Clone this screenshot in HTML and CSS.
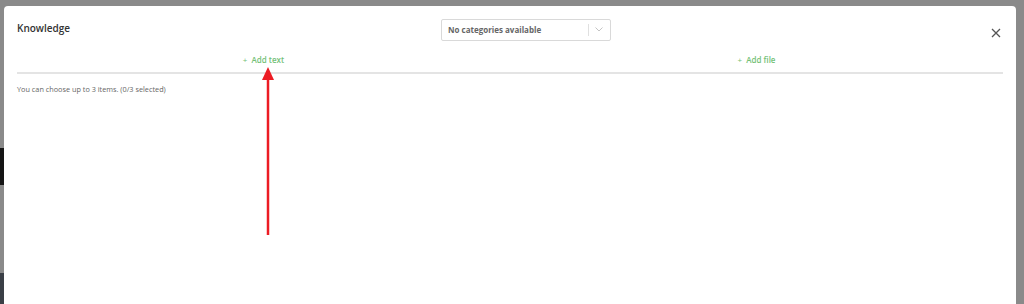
FILE: index.html
```html
<!DOCTYPE html>
<html lang="en">
<head>
    <meta charset="UTF-8">
    <meta name="viewport" content="width=device-width, initial-scale=1.0">
    <title>Knowledge</title>
    <link rel="stylesheet" href="styles.css">
</head>
<body>

<div class="backdrop">
    <div class="page-edge left">
        <div class="edge-block"></div>
        <div class="edge-photo"></div>
    </div>

    <div class="modal">
        <div class="modal-header">
            <h2 class="modal-title">Knowledge</h2>
            <div class="select">
                <span class="select-value">No categories available</span>
                <span class="select-sep"></span>
                <svg class="select-chevron" width="8" height="5" viewBox="0 0 8 5">
                    <path d="M0.5 0.5 L4 4 L7.5 0.5" fill="none" stroke="#c4c4c4" stroke-width="1"/>
                </svg>
            </div>
            <button class="close" type="button">
                <svg width="10" height="10" viewBox="0 0 10 10">
                    <path d="M1 1 L9 9 M9 1 L1 9" stroke="#555" stroke-width="1.3"/>
                </svg>
            </button>
        </div>

        <div class="tabs">
            <div class="tab"><span class="plus">+</span> Add text</div>
            <div class="tab"><span class="plus">+</span> Add file</div>
        </div>

        <p class="hint">You can choose up to 3 items. (0/3 selected)</p>

        <!-- annotation arrow over the screenshot -->
        <svg class="arrow" width="16" height="170" viewBox="0 0 16 170">
            <path d="M8 10 L8 168" stroke="#ec1c24" stroke-width="2.5"/>
            <path d="M8 0 L14 13 L2 13 Z" fill="#ec1c24"/>
        </svg>
    </div>
</div>

</body>
</html>
```

FILE: styles.css
```css
body {
    margin: 0;
    font-family: "Open Sans", "Noto Sans", sans-serif;
    background-color: #8a8a8a;
    overflow: hidden;
}

.backdrop {
    position: relative;
    height: 304px;
    padding: 6px 8px 0 4px;
    box-sizing: border-box;
}

.page-edge.left {
    position: absolute;
    left: 0;
    top: 0;
    width: 4px;
    height: 304px;
}

.edge-block {
    margin-top: 148px;
    height: 37px;
    background: #151515;
}

.edge-photo {
    margin-top: 88px;
    height: 31px;
    background: #3a3f46;
}

.modal {
    position: relative;
    background: #fff;
    border-radius: 4px 4px 0 0;
    height: 298px;
    padding: 0 13px;
}

.modal-header {
    display: flex;
    align-items: center;
    height: 46px;
}

.modal-title {
    flex: 1;
    margin: -2px 0 0;
    font-size: 10px;
    font-weight: 600;
    color: #333;
}

.select {
    display: flex;
    align-items: center;
    width: 168px;
    height: 20px;
    border: 1px solid #d9d9d9;
    border-radius: 2px;
    margin-top: 1px;
    margin-right: 380px;
}

.select-value {
    flex: 1;
    padding-left: 6px;
    font-size: 8px;
    font-weight: 700;
    color: #666;
}

.select-sep {
    width: 1px;
    height: 12px;
    background: #e0e0e0;
}

.select-chevron {
    margin: 0 7px 0 6px;
}

.close {
    background: none;
    border: none;
    padding: 0;
    width: 10px;
    height: 10px;
    margin-top: 4px;
    margin-right: 2px;
    cursor: pointer;
}

.tabs {
    display: flex;
    border-bottom: 2px solid #e4e4e4;
    height: 20px;
}

.tab {
    flex: 1;
    text-align: center;
    font-size: 8px;
    font-weight: 600;
    color: #74c177;
    line-height: 16px;
}

.plus {
    font-weight: 400;
    margin-right: 2px;
}

.hint {
    margin: 10px 0 0;
    font-size: 7.3px;
    color: #666;
}

.arrow {
    position: absolute;
    left: 256px;
    top: 61px;
}
```
